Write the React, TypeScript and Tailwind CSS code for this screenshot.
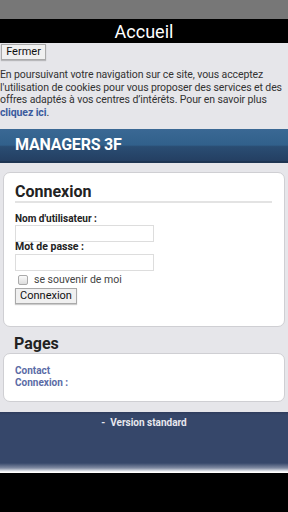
export default function App() {
  return (
    <div className="w-[288px] h-[512px] overflow-hidden bg-black font-['Roboto','Liberation_Sans',sans-serif]">
      <div className="h-[19px] bg-[#777777]"></div>
      <div className="h-[24px] bg-black text-white text-center text-[18px] leading-[26px]">Accueil</div>

      <div className="bg-[#e6e6ea]">
        <div className="pt-px pl-px flex">
          <button className="h-[16px] w-[45px] bg-[#f0f0f0] border border-[#aaa] text-[11px] leading-[14px] text-[#111] shadow-[0_1px_1px_rgba(0,0,0,0.2)]">Fermer</button>
        </div>
        <p className="mt-[9px] text-[10.5px] leading-[12.5px] text-[#333] tracking-[-0.1px]">
          En poursuivant votre navigation sur ce site, vous acceptez l'utilisation de cookies pour vous proposer des services et des offres adaptés à vos centres d’intérêts. Pour en savoir plus{" "}
          <a className="text-[#3b5b9e] font-bold">cliquez ici</a>.
        </p>

        <div className="mt-[10px] h-[34px] bg-[linear-gradient(#3a6894_0%,#31608b_50%,#2a4d73_55%,#243f62_100%)] border-b-2 border-[#1e3552] pl-[15px] flex items-center">
          <span className="text-white font-bold text-[16px] tracking-[-0.2px]">MANAGERS 3F</span>
        </div>

        <div className="pt-[9px] px-[3px]">
          <div className="h-[155px] bg-white border border-[#cfcfd3] rounded-[7px] px-[11px] pt-[10px]">
            <h2 className="text-[16px] leading-[18px] font-bold text-[#222] border-b-2 border-[#e3e3e3] mr-[1px]">Connexion</h2>
            <div className="mt-[11px] text-[10px] leading-[10px] font-bold text-[#222]">Nom d'utilisateur :</div>
            <div className="mt-[1px] w-[139px] h-[17px] border border-[#ddd] bg-white"></div>
            <div className="text-[10.5px] leading-[10px] font-bold text-[#222]">Mot de passe :</div>
            <div className="mt-[2px] w-[139px] h-[17px] border border-[#ddd] bg-white"></div>
            <div className="mt-[3px] flex items-center h-[12px]">
              <span className="ml-[3px] w-[10px] h-[10px] rounded-[2px] border border-[#aaa] bg-[linear-gradient(#fafafa,#ddd)]"></span>
              <span className="ml-[6px] text-[10.5px] leading-[12px] text-[#444]">se souvenir de moi</span>
            </div>
            <div className="mt-[2px] flex">
              <button className="h-[16px] w-[62px] bg-[#f0f0f0] border border-[#aaa] text-[11px] leading-[14px] text-[#111] shadow-[0_1px_1px_rgba(0,0,0,0.2)]">Connexion</button>
            </div>
          </div>
        </div>

        <h2 className="mt-[8px] pl-[14px] text-[16px] leading-[18px] font-bold text-[#222]">Pages</h2>
        <div className="px-[3px] pb-[10px]">
          <div className="h-[49px] bg-white border border-[#cfcfd3] rounded-[7px] px-[11px] pt-[11px] text-[10px] leading-[12px] font-bold text-[#5b6ba6]">
            <div>Contact</div>
            <div>Connexion :</div>
          </div>
        </div>
      </div>

      <div className="h-[61px] bg-[linear-gradient(#2e3c5c_0px,#36476a_3px,#36476a_51px,#7f8aa2_56px,#ffffff_60px,#ffffff_61px)] text-center pt-[4px] text-[10px] leading-[14px]">
        <span className="font-bold text-[#e8e8ee]">-&nbsp; Version standard</span>
      </div>
    </div>
  );
}
